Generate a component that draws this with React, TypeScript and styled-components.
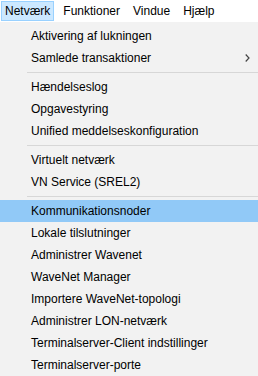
import React from 'react';
import styled, { createGlobalStyle } from 'styled-components';

const GlobalStyle = createGlobalStyle`
  html, body {
    margin: 0;
    padding: 0;
    background: #f2f2f2;
  }
  body {
    font-family: "Liberation Sans", Arial, sans-serif;
    font-size: 12px;
    color: #000;
  }
`

const Window = styled.div`
  width: 258px;
  height: 376px;
  overflow: hidden;
  display: flex;
  flex-direction: column;
`

const MenuBar = styled.div`
  height: 22px;
  background: #fff;
  display: flex;
  align-items: flex-start;
  padding-left: 1px;
  gap: 5px;
`

const MenuBarItem = styled.div<{ $open?: boolean }>`
  height: 18px;
  margin-top: 1px;
  padding: 0 3px;
  display: flex;
  align-items: center;
  border: 1px solid ${(p) => (p.$open ? '#99d1ff' : 'transparent')};
  background: ${(p) => (p.$open ? '#cce8ff' : 'transparent')};
  white-space: nowrap;
`

const Dropdown = styled.div`
  flex: 1;
  background: #f2f2f2;
  padding-top: 3px;
  display: flex;
  flex-direction: column;
`

const Item = styled.div<{ $active?: boolean }>`
  height: 22px;
  flex-shrink: 0;
  display: flex;
  align-items: center;
  justify-content: space-between;
  padding: 0 8px 0 31px;
  background: ${(p) => (p.$active ? '#91c9f7' : 'transparent')};
  white-space: nowrap;
`

const Separator = styled.div`
  height: 1px;
  flex-shrink: 0;
  margin: 3px 0 3px 27px;
  background: #d7d7d7;
`

const Chevron = () => (
  <svg width="5" height="8" viewBox="0 0 5 8">
    <polyline points="0.7,0.5 4,4 0.7,7.5" fill="none" stroke="#444" strokeWidth="1.2" />
  </svg>
)

type Entry = { label?: string, sub?: boolean, active?: boolean, sep?: boolean }

const entries: Entry[] = [
  { label: 'Aktivering af lukningen' },
  { label: 'Samlede transaktioner', sub: true },
  { sep: true },
  { label: 'Hændelseslog' },
  { label: 'Opgavestyring' },
  { label: 'Unified meddelseskonfiguration' },
  { sep: true },
  { label: 'Virtuelt netværk' },
  { label: 'VN Service (SREL2)' },
  { sep: true },
  { label: 'Kommunikationsnoder', active: true },
  { label: 'Lokale tilslutninger' },
  { label: 'Administrer Wavenet' },
  { label: 'WaveNet Manager' },
  { label: 'Importere WaveNet-topologi' },
  { label: 'Administrer LON-netværk' },
  { label: 'Terminalserver-Client indstillinger' },
  { label: 'Terminalserver-porte' },
]

export default function App() {
  return (
    <Window>
      <GlobalStyle />
      <MenuBar>
        <MenuBarItem $open>Netværk</MenuBarItem>
        <MenuBarItem>Funktioner</MenuBarItem>
        <MenuBarItem>Vindue</MenuBarItem>
        <MenuBarItem>Hjælp</MenuBarItem>
      </MenuBar>
      <Dropdown>
        {entries.map((entry, i) => {
          if (entry.sep) return <Separator key={i} />
          return (
            <Item key={i} $active={entry.active}>
              <span>{entry.label}</span>
              {entry.sub && <Chevron />}
            </Item>
          )
        })}
      </Dropdown>
    </Window>
  )
}
